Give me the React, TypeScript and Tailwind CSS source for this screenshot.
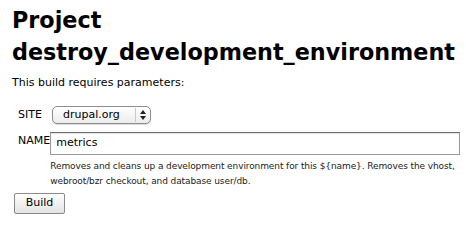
export default function App() {
  return (
    <main className="bg-white px-3 pt-[4px] text-black" style={{ fontFamily: 'Verdana, "DejaVu Sans", sans-serif' }}>
      <h1 className="text-[22.3px] font-bold leading-[32px]">
        Project
        <br />
        destroy_development_environment
      </h1>
      <p className="mt-[8px] text-[11px] leading-[14px]">This build requires parameters:</p>
      <div className="mt-[16px] flex flex-col gap-[8px] pl-[6px]">
        <div className="flex items-center">
          <span className="w-[34px] text-[11px]">SITE</span>
          <div className="flex h-[18px] w-[99px] items-center justify-between rounded-[5px] border border-[#8e8e8e] bg-gradient-to-b from-white to-[#ececec] pl-[10px] pr-[4px] text-[11px] shadow-[0_1px_1px_rgba(0,0,0,0.15)]">
            <span>drupal.org</span>
            <span className="flex h-[14px] items-center border-l border-[#c8c8c8] pl-[4px]">
              <svg width="6" height="10" viewBox="0 0 6 10">
                <path d="M3 0L6 4H0z" fill="#222" />
                <path d="M3 10L6 6H0z" fill="#222" />
              </svg>
            </span>
          </div>
        </div>
        <div className="flex items-start">
          <span className="w-[34px] pt-[1px] text-[11px]">NAME</span>
          <div className="w-[412px]">
            <div className="flex h-[23px] w-[410px] items-center border border-[#9a9a9a] border-t-[#6e6e6e] bg-white px-[5px] text-[11px] shadow-[inset_0_1px_1px_rgba(0,0,0,0.12)]">
              metrics
            </div>
            <p className="mt-[4px] text-[9px] leading-[15px] tracking-[-0.1px] text-[#222]">
              Removes and cleans up a development environment for this {'${name}'}. Removes the vhost, webroot/bzr checkout, and database user/db.
            </p>
          </div>
        </div>
      </div>
      <button className="mt-[-1px] ml-[2px] h-[21px] w-[51px] rounded-[2px] border border-[#8a8a8a] bg-gradient-to-b from-white to-[#e3e3e3] text-[11px]">
        Build
      </button>
    </main>
  );
}
